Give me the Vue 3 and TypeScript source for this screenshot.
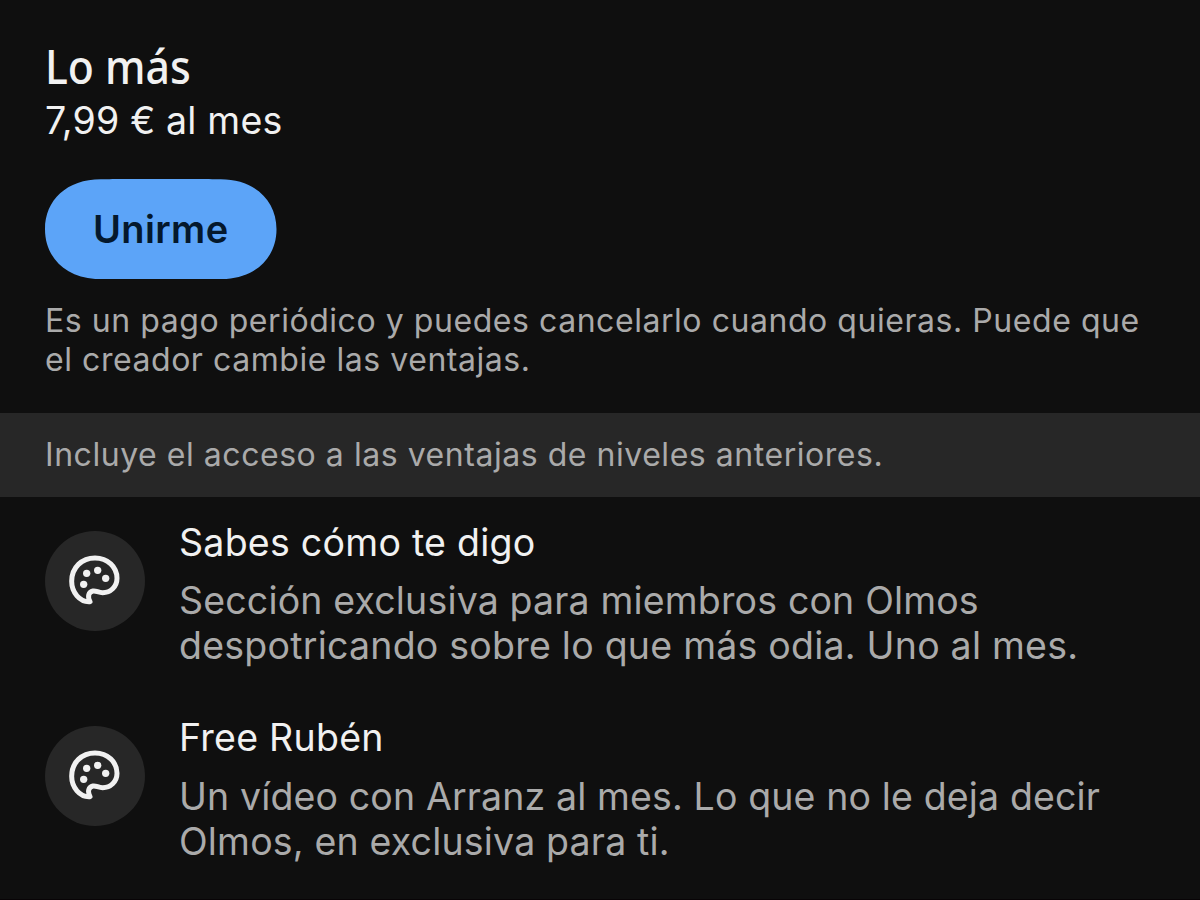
<script setup lang="ts">
interface Line {
  text: string
  spacing: number
}

interface Perk {
  title: Line
  lines: Line[]
}

const terms: Line[] = [
  { text: 'Es un pago periódico y puedes cancelarlo cuando quieras. Puede que', spacing: 0.55 },
  { text: 'el creador cambie las ventajas.', spacing: 0.55 },
]

const included: Line = { text: 'Incluye el acceso a las ventajas de niveles anteriores.', spacing: 0.54 }

const perks: Perk[] = [
  {
    title: { text: 'Sabes cómo te digo', spacing: 0.26 },
    lines: [
      { text: 'Sección exclusiva para miembros con Olmos', spacing: 0.16 },
      { text: 'despotricando sobre lo que más odia. Uno al mes.', spacing: 0.23 },
    ],
  },
  {
    title: { text: 'Free Rubén', spacing: 0.26 },
    lines: [
      { text: 'Un vídeo con Arranz al mes. Lo que no le deja decir', spacing: 0.13 },
      { text: 'Olmos, en exclusiva para ti.', spacing: 0.18 },
    ],
  },
]

const tracking = (line: Line) => ({ letterSpacing: `${line.spacing}px` })
</script>

<template>
  <main class="page">
    <section class="plan">
      <h1 class="plan-name">Lo más</h1>
      <p class="price">7,99 € al mes</p>
      <button class="join" type="button">
        <svg class="join-shape" viewBox="0 0 232 100" preserveAspectRatio="none" aria-hidden="true">
          <path d="M56 0.3C70 0 162 0 176 0.3C210 0.3 232 21 232 50C232 79 210 99.7 176 99.7C162 100 70 100 56 99.7C22 99.7 0 79 0 50C0 21 22 0.3 56 0.3Z" />
        </svg>
        <span class="join-label">Unirme</span>
      </button>
      <p class="terms">
        <span v-for="line in terms" :key="line.text" class="line" :style="tracking(line)">{{ line.text }}</span>
      </p>
    </section>
    <p class="included"><span :style="tracking(included)">{{ included.text }}</span></p>
    <ul class="perks">
      <li v-for="perk in perks" :key="perk.title.text" class="perk">
        <svg class="perk-icon" viewBox="0 0 300 300" aria-hidden="true">
          <circle class="disc" cx="150" cy="150" r="150" />
          <path class="palette" d="M135 212C104 214 80 184 80 151C80 109 111 81 150 81C188 81 216 108 216 142C216 168 196 185 173 185C160 185 153 178 144 180C130 183 127 197 135 212Z" />
          <circle class="paint" cx="125" cy="127" r="11" />
          <circle class="paint" cx="158" cy="118" r="11" />
          <circle class="paint" cx="182" cy="142" r="11" />
          <circle class="paint" cx="116" cy="160" r="11" />
        </svg>
        <div class="perk-text">
          <h2 class="perk-title" :style="tracking(perk.title)">{{ perk.title.text }}</h2>
          <p class="perk-body">
            <span v-for="line in perk.lines" :key="line.text" class="line" :style="tracking(line)">{{ line.text }}</span>
          </p>
        </div>
      </li>
    </ul>
  </main>
</template>

<style>
body {
  margin: 0;
  background: #0f0f0f;
}
</style>

<style scoped>
.page {
  width: 1200px;
  height: 900px;
  box-sizing: border-box;
  overflow: hidden;
  background: #0f0f0f;
  border-bottom: 1px solid #080406;
  color: #f1f1f1;
  font-family: Inter, "Liberation Sans", sans-serif;
}
h1, h2, p, ul {
  margin: 0;
  padding: 0;
  font-weight: 400;
}
.line {
  display: block;
  white-space: nowrap;
}
.plan {
  height: 413px;
  box-sizing: border-box;
  padding: 41px 45px 0;
}
.plan-name {
  font-family: "Noto Sans", "Open Sans", sans-serif;
  font-weight: 500;
  font-size: 46.5px;
  line-height: 50px;
  transform: scaleX(0.92);
  transform-origin: left;
}
.price {
  margin-top: 7px;
  font-size: 37.5px;
  line-height: 46px;
  letter-spacing: 0.2px;
}
.join {
  display: grid;
  place-items: center;
  width: 231.5px;
  height: 100.5px;
  margin-top: 34.5px;
  padding: 0;
  border: 0;
  background: none;
  color: #04182d;
  font: inherit;
}
.join-shape,
.join-label {
  grid-area: 1 / 1;
}
.join-shape {
  width: 100%;
  height: 100%;
  fill: #5ca4f8;
}
.join-label {
  z-index: 1;
  font-size: 38px;
  font-weight: 600;
  letter-spacing: 0.4px;
}
.terms {
  margin-top: 22px;
  color: #aaa;
  font-size: 32px;
  line-height: 39.3px;
}
.included {
  display: flex;
  align-items: center;
  height: 83.5px;
  padding: 0 45px;
  background: #272727;
  color: #aaa;
  font-size: 32px;
  white-space: nowrap;
}
.perks {
  padding: 22.5px 45px 0;
  list-style: none;
}
.perk {
  display: flex;
  gap: 34px;
  height: 195.4px;
}
.perk-icon {
  flex: none;
  width: 100px;
  height: 100px;
  margin-top: 11.5px;
}
.disc {
  fill: #272727;
}
.palette {
  fill: none;
  stroke: #f1f1f1;
  stroke-width: 15;
  stroke-linejoin: round;
}
.paint {
  fill: #f1f1f1;
}
.perk-title {
  padding-top: 1px;
  font-size: 37.5px;
  line-height: 46px;
  white-space: nowrap;
}
.perk-body {
  margin-top: 12.15px;
  color: #aaa;
  font-size: 37.5px;
  line-height: 45px;
}
</style>
